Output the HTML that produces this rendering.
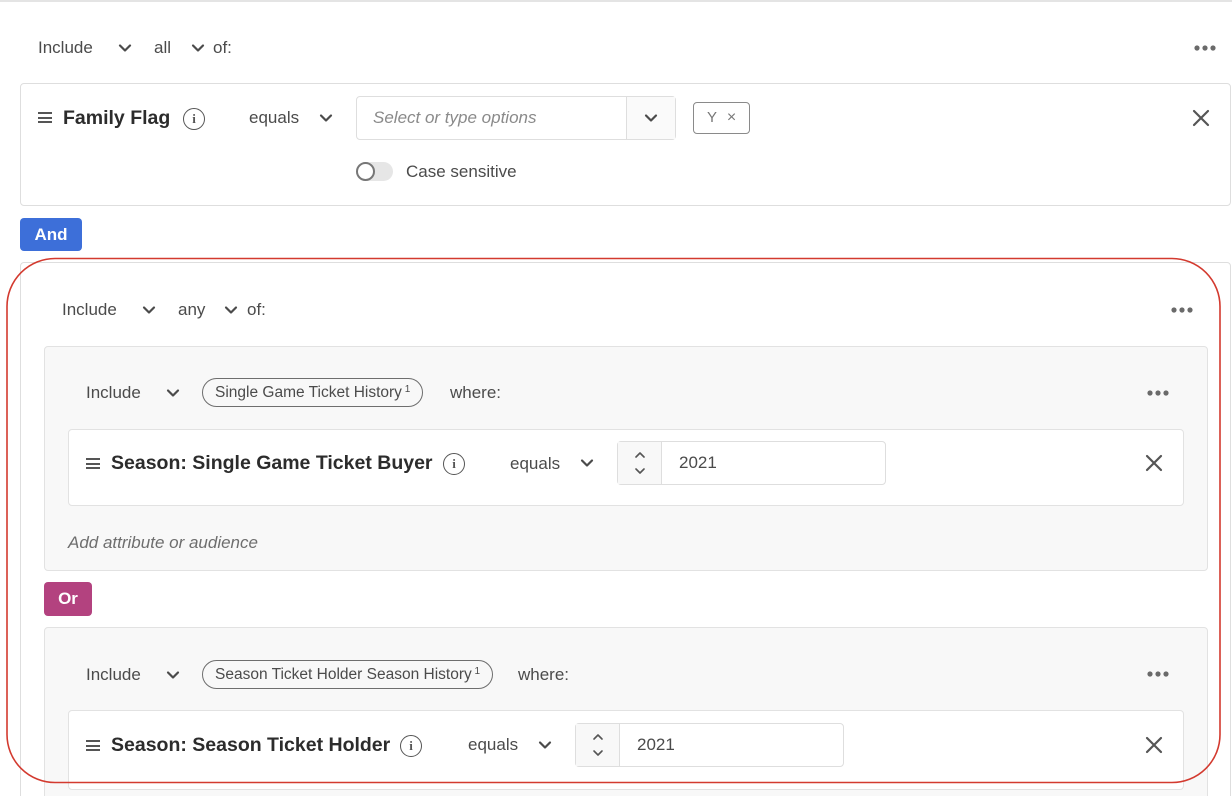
<!DOCTYPE html>
<html style="width:1232px;height:796px;overflow:hidden"><head><meta charset="utf-8"><style>
*{box-sizing:border-box;margin:0;padding:0}
body{width:1232px;height:796px;overflow:hidden;background:#fff;font-family:"Liberation Sans",sans-serif;color:#4b4b4b;position:relative}
.a{position:absolute;white-space:nowrap}
.t{font-size:17px;line-height:20px}
.b{font-weight:bold;font-size:19.5px;color:#2c2c2c;line-height:22px}
.box{position:absolute;border:1px solid #dedede;border-radius:4px}
.chev{position:absolute;width:14px;height:10px}
.dots{position:absolute;width:22px;height:6px}
.info{position:absolute;width:22px;height:22px;border:1.5px solid #555;border-radius:50%;font:bold 13px "Liberation Serif",serif;text-align:center;line-height:19px;color:#555}
.ham{position:absolute;width:14px;height:11px;border-top:2px solid #555;border-bottom:2px solid #555}
.ham:after{content:"";position:absolute;left:0;right:0;top:2.5px;border-top:2px solid #555}
.pill{position:absolute;border:1.5px solid #6e6e6e;border-radius:16px;font-size:15.5px;line-height:27px;padding:0 12px;color:#4b4b4b}
.pill sup{font-size:10px;position:relative;top:-3px;vertical-align:top}
</style></head><body>
<svg width="0" height="0" style="position:absolute"><defs>
<symbol id="cv" viewBox="0 0 14 10"><path d="M2 2.5 L7 7.5 L12 2.5" fill="none" stroke="#4b4b4b" stroke-width="2.2" stroke-linecap="round" stroke-linejoin="round"/></symbol>
<symbol id="dt" viewBox="0 0 22 6"><circle cx="3" cy="3" r="2.6" fill="#6a6a6a"/><circle cx="11" cy="3" r="2.6" fill="#6a6a6a"/><circle cx="19" cy="3" r="2.6" fill="#6a6a6a"/></symbol>
<symbol id="x" viewBox="0 0 18 18"><path d="M2 2L16 16M16 2L2 16" stroke="#555" stroke-width="2.2" stroke-linecap="round"/></symbol>
<symbol id="ud" viewBox="0 0 12 26"><path d="M2 7L6 3L10 7M2 19L6 23L10 19" fill="none" stroke="#555" stroke-width="1.6" stroke-linecap="round" stroke-linejoin="round"/></symbol>
</defs></svg>
<div class="a" style="left:0;top:0;width:1232px;border-top:2px solid #e4e4e4"></div>

<div class="a t" style="left:38px;top:38px">Include</div>
<svg class="chev" style="left:118px;top:43px"><use href="#cv"/></svg>
<div class="a t" style="left:154px;top:38px">all</div>
<svg class="chev" style="left:191px;top:43px"><use href="#cv"/></svg>
<div class="a t" style="left:213px;top:38px">of:</div>
<svg class="dots" style="left:1194px;top:45px"><use href="#dt"/></svg>

<div class="box" style="left:20px;top:83px;width:1211px;height:123px"></div>
<div class="ham" style="left:38px;top:112px"></div>
<div class="a b" style="left:63px;top:107px">Family Flag</div>
<div class="info" style="left:183px;top:108px">i</div>
<div class="a t" style="left:249px;top:108px">equals</div>
<svg class="chev" style="left:319px;top:113px"><use href="#cv"/></svg>
<div class="box" style="left:356px;top:96px;width:320px;height:44px;border-radius:4px"></div>
<div class="a" style="left:626px;top:97px;width:49px;height:42px;border-left:1px solid #dedede;background:#fafafa"></div>
<svg class="chev" style="left:644px;top:113px"><use href="#cv"/></svg>
<div class="a t" style="left:373px;top:108px;font-style:italic;color:#8a8a8a">Select or type options</div>
<div class="a" style="left:693px;top:102px;width:57px;height:32px;border:1.5px solid #8a8a8a;border-radius:4px;font-size:15px;line-height:29px;color:#777;padding-left:13px">Y <span style="margin-left:6px;font-size:16px">×</span></div>
<svg class="a" style="left:1192px;top:109px;width:18px;height:18px"><use href="#x"/></svg>
<div class="a" style="left:356px;top:162px;width:37px;height:19px;border-radius:10px;background:#e6e6e6"></div>
<div class="a" style="left:356px;top:162px;width:19px;height:19px;border-radius:50%;border:2px solid #777;background:#fff"></div>
<div class="a t" style="left:406px;top:162px">Case sensitive</div>

<div class="a" style="left:20px;top:218px;width:62px;height:33px;background:#3d6fd9;border-radius:4px;color:#fff;font-weight:bold;font-size:17px;line-height:33px;text-align:center">And</div>

<div class="box" style="left:20px;top:262px;width:1211px;height:560px"></div>
<div class="a t" style="left:62px;top:300px">Include</div>
<svg class="chev" style="left:142px;top:305px"><use href="#cv"/></svg>
<div class="a t" style="left:178px;top:300px">any</div>
<svg class="chev" style="left:224px;top:305px"><use href="#cv"/></svg>
<div class="a t" style="left:247px;top:300px">of:</div>
<svg class="dots" style="left:1171px;top:307px"><use href="#dt"/></svg>

<div class="box" style="left:44px;top:346px;width:1164px;height:225px;background:#f8f8f8;border-color:#e2e2e2"></div>
<div class="a t" style="left:86px;top:383px">Include</div>
<svg class="chev" style="left:166px;top:388px"><use href="#cv"/></svg>
<div class="pill" style="left:202px;top:378px">Single Game Ticket History<sup> 1</sup></div>
<div class="a t" style="left:450px;top:383px">where:</div>
<svg class="dots" style="left:1147px;top:390px"><use href="#dt"/></svg>
<div class="box" style="left:68px;top:429px;width:1116px;height:77px;background:#fff;border-color:#e2e2e2"></div>
<div class="ham" style="left:86px;top:458px"></div>
<div class="a b" style="left:111px;top:452px">Season: Single Game Ticket Buyer</div>
<div class="info" style="left:443px;top:453px">i</div>
<div class="a t" style="left:510px;top:454px">equals</div>
<svg class="chev" style="left:580px;top:458px"><use href="#cv"/></svg>
<div class="box" style="left:617px;top:441px;width:269px;height:44px;background:#fff"></div>
<div class="a" style="left:618px;top:442px;width:44px;height:42px;border-right:1px solid #dedede;background:#f8f8f8"></div>
<svg class="a" style="left:634px;top:450px;width:12px;height:26px"><use href="#ud"/></svg>
<div class="a t" style="left:679px;top:453px">2021</div>
<svg class="a" style="left:1145px;top:454px;width:18px;height:18px"><use href="#x"/></svg>
<div class="a t" style="left:68px;top:533px;font-style:italic;color:#6e6e6e">Add attribute or audience</div>

<div class="a" style="left:44px;top:582px;width:48px;height:34px;background:#b3427f;border-radius:4px;color:#fff;font-weight:bold;font-size:17px;line-height:34px;text-align:center">Or</div>

<div class="box" style="left:44px;top:627px;width:1164px;height:200px;background:#f8f8f8;border-color:#e2e2e2"></div>
<div class="a t" style="left:86px;top:665px">Include</div>
<svg class="chev" style="left:166px;top:670px"><use href="#cv"/></svg>
<div class="pill" style="left:202px;top:660px">Season Ticket Holder Season History<sup> 1</sup></div>
<div class="a t" style="left:518px;top:665px">where:</div>
<svg class="dots" style="left:1147px;top:671px"><use href="#dt"/></svg>
<div class="box" style="left:68px;top:710px;width:1116px;height:80px;background:#fff;border-color:#e2e2e2"></div>
<div class="ham" style="left:86px;top:740px"></div>
<div class="a b" style="left:111px;top:734px">Season: Season Ticket Holder</div>
<div class="info" style="left:400px;top:735px">i</div>
<div class="a t" style="left:468px;top:735px">equals</div>
<svg class="chev" style="left:538px;top:740px"><use href="#cv"/></svg>
<div class="box" style="left:575px;top:723px;width:269px;height:44px;background:#fff"></div>
<div class="a" style="left:576px;top:724px;width:44px;height:42px;border-right:1px solid #dedede;background:#f8f8f8"></div>
<svg class="a" style="left:592px;top:732px;width:12px;height:26px"><use href="#ud"/></svg>
<div class="a t" style="left:637px;top:735px">2021</div>
<svg class="a" style="left:1145px;top:736px;width:18px;height:18px"><use href="#x"/></svg>

<svg class="a" style="left:0;top:0;width:1232px;height:796px" viewBox="0 0 1232 796"><rect x="7" y="258.5" width="1213" height="524" rx="48" ry="48" fill="none" stroke="#d33a2f" stroke-width="1.6"/></svg>
</body></html>
